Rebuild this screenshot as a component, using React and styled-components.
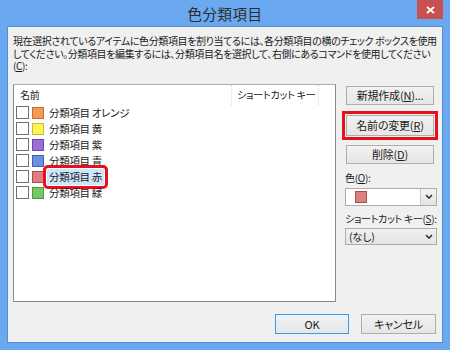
import React from "react";
import styled, { createGlobalStyle } from "styled-components";

const Global = createGlobalStyle`
  html, body { margin: 0; padding: 0; }
  body {
    width: 450px; height: 350px; overflow: hidden;
    font-family: "Noto Sans CJK JP", "Liberation Sans", sans-serif;
    font-size: 10px;
    color: #1a1a1a;
  }
`;

const Frame = styled.div`
  width: 450px;
  height: 350px;
  box-sizing: border-box;
  background: #6aa8f0;
  padding: 0 7px 7px 7px;
  display: flex;
  flex-direction: column;
`;

const TitleBar = styled.div`
  height: 26px;
  position: relative;
  display: flex;
  align-items: center;
  justify-content: center;
  font-size: 14.5px;
  color: #2b2b2b;
  letter-spacing: 0.5px;
`;

const CloseBtn = styled.div`
  position: absolute;
  right: 0;
  top: 0;
  width: 26px;
  height: 19px;
  background: #c75050;
  display: flex;
  align-items: center;
  justify-content: center;
`;

const Client = styled.div`
  flex: 1;
  background: #f0f0f0;
  border: 1px solid #4f8fd8;
  box-sizing: border-box;
  padding: 8px 5px 8px 5px;
  display: flex;
  flex-direction: column;
`;

const Desc = styled.div`
  font-size: 10px;
  line-height: 12.5px;
  white-space: nowrap;
  font-feature-settings: "palt";
  letter-spacing: -0.38px;
`;

const DescLine = styled.div`
  height: 12.5px;
`;

const U = styled.span`
  text-decoration: underline;
  text-underline-offset: 1px;
`;

const Main = styled.div`
  margin-top: 11px;
  height: 218px;
  display: flex;
  gap: 9px;
`;

const ListBox = styled.div`
  width: 323px;
  box-sizing: border-box;
  background: #fff;
  border: 1px solid #8a8a8a;
  border-top-color: #abadb3;
  display: flex;
  flex-direction: column;
`;

const HeaderRow = styled.div`
  height: 20px;
  display: grid;
  grid-template-columns: 218px 87px 1fr;
  align-items: stretch;
`;

const HeaderCell = styled.div`
  display: flex;
  align-items: center;
  padding-left: ${(p) => p.$pad || 4}px;
  border-right: ${(p) => (p.$last ? "none" : "1px dotted #dcdcdc")};
  font-size: 10px;
  white-space: nowrap;
  font-feature-settings: "palt";
  letter-spacing: -0.2px;
`;

const Row = styled.div`
  height: 16px;
  display: flex;
  align-items: center;
  padding-left: 2px;
`;

const Check = styled.div`
  width: 11px;
  height: 11px;
  border: 1px solid #707070;
  background: #fff;
  flex: none;
`;

const Swatch = styled.div`
  width: 10px;
  height: 10px;
  margin-left: ${(p) => (p.$flush ? 0 : 3)}px;
  border: 1px solid ${(p) => p.$border};
  background: ${(p) => p.$color};
  flex: none;
`;

const Label = styled.div`
  margin-left: ${(p) => (p.$selected ? 3 : 5)}px;
  padding: 0 ${(p) => (p.$selected ? 2 : 0)}px;
  height: 16px;
  line-height: 16px;
  font-size: 10.5px;
  font-feature-settings: "palt";
  letter-spacing: -0.3px;
  white-space: nowrap;
  background: ${(p) => (p.$selected ? "#cde6fb" : "transparent")};
  outline: ${(p) => (p.$selected ? "3px solid #e8101a" : "none")};
  outline-offset: 1px;
  border-radius: 1px;
`;

const Side = styled.div`
  width: 92px;
  display: flex;
  flex-direction: column;
  padding-top: 2px;
`;

const Button = styled.button`
  box-sizing: border-box;
  width: ${(p) => p.$w || 88}px;
  height: ${(p) => p.$h || 19}px;
  margin-left: ${(p) => p.$ml || 0}px;
  border: 1px solid ${(p) => (p.$default ? "#3c9be8" : "#adadad")};
  background: linear-gradient(#f2f2f2, #e6e6e6);
  font-family: "Noto Sans CJK JP", "Liberation Sans", sans-serif;
  font-size: 11px;
  font-feature-settings: "palt";
  color: #1a1a1a;
  padding: 0;
  letter-spacing: -0.2px;
  display: flex;
  align-items: center;
  justify-content: center;
  outline: ${(p) => (p.$mark ? "3px solid #e8101a" : "none")};
  outline-offset: 1px;
  border-radius: 0;
`;

const SideLabel = styled.div`
  height: 12px;
  line-height: 12px;
  font-size: 10px;
  letter-spacing: -0.3px;
  font-feature-settings: "palt";
  white-space: nowrap;
`;

const Combo = styled.div`
  box-sizing: border-box;
  height: ${(p) => p.$h}px;
  width: 92px;
  border: 1px solid ${(p) => (p.$ro ? "#acacac" : "#abadb3")};
  background: ${(p) => (p.$ro ? "linear-gradient(#f0f0f0, #e5e5e5)" : "#fff")};
  display: flex;
  align-items: center;
  font-size: 10.5px;
  font-feature-settings: "palt";
  letter-spacing: -0.2px;
`;

const ComboValue = styled.div`
  flex: 1;
  padding-left: ${(p) => p.$pad}px;
  display: flex;
  align-items: center;
`;

const DropBtn = styled.div`
  width: ${(p) => p.$w}px;
  align-self: stretch;
  display: flex;
  align-items: center;
  justify-content: center;
  border-left: ${(p) => (p.$sep ? "1px solid #c8c8c8" : "none")};
  background: ${(p) => (p.$sep ? "linear-gradient(#f3f3f3, #e4e4e4)" : "transparent")};
`;

const Footer = styled.div`
  margin-top: 12px;
  display: flex;
  justify-content: flex-end;
  gap: 12px;
  padding-right: 1px;
`;

const Spacer = styled.div`
  height: ${(p) => p.$h}px;
  flex: none;
`;

const Chevron = () => (
  <svg width="8" height="5" viewBox="0 0 8 5">
    <path d="M1 1 L4 4 L7 1" stroke="#333" strokeWidth="1.6" fill="none" />
  </svg>
);

const items = [
  { name: "オレンジ", color: "#f39b55", border: "#c8702a" },
  { name: "黄", color: "#fbf35a", border: "#c9bd2a" },
  { name: "紫", color: "#9b6fd3", border: "#6a45a3" },
  { name: "青", color: "#6d8fdf", border: "#3f5fb0" },
  { name: "赤", color: "#dc7f80", border: "#b04c4e", selected: true },
  { name: "緑", color: "#78c766", border: "#4d9a3c" },
];

export default function App() {
  return (
    <>
      <Global />
      <Frame>
        <TitleBar>
          色分類項目
          <CloseBtn>
            <svg width="9" height="8" viewBox="0 0 9 8">
              <path d="M1 1 L8 7 M8 1 L1 7" stroke="#fff" strokeWidth="1.8" />
            </svg>
          </CloseBtn>
        </TitleBar>
        <Client>
          <Desc>
            <DescLine>
              現在選択されているアイテムに色分類項目を割り当てるには、各分類項目の横のチェック ボックスを使用
            </DescLine>
            <DescLine>
              してください。分類項目を編集するには、分類項目名を選択して、右側にあるコマンドを使用してください
            </DescLine>
            <DescLine>
              (<U>C</U>):
            </DescLine>
          </Desc>
          <Main>
            <ListBox>
              <HeaderRow>
                <HeaderCell $pad={6}>名前</HeaderCell>
                <HeaderCell $pad={5}>ショートカット キー</HeaderCell>
                <HeaderCell $last />
              </HeaderRow>
              {items.map((it) => (
                <Row key={it.name}>
                  <Check />
                  <Swatch $color={it.color} $border={it.border} />
                  <Label $selected={it.selected}>分類項目 {it.name}</Label>
                </Row>
              ))}
            </ListBox>
            <Side>
              <Button $ml={1}>
                新規作成(<U>N</U>)...
              </Button>
              <Spacer $h={10} />
              <Button $ml={1} $h={21} $mark>
                名前の変更(<U>R</U>)
              </Button>
              <Spacer $h={9} />
              <Button $ml={1}>
                削除(<U>D</U>)
              </Button>
              <Spacer $h={8} />
              <SideLabel>
                色(<U>O</U>):
              </SideLabel>
              <Spacer $h={4} />
              <Combo $h={18}>
                <ComboValue $pad={9}>
                  <Swatch $flush $color="#dc7f80" $border="#b04c4e" />
                </ComboValue>
                <DropBtn $w={15} $sep>
                  <Chevron />
                </DropBtn>
              </Combo>
              <Spacer $h={7} />
              <SideLabel>
                ショートカット キー(<U>S</U>):
              </SideLabel>
              <Spacer $h={3} />
              <Combo $h={17} $ro>
                <ComboValue $pad={3}>(なし)</ComboValue>
                <DropBtn $w={14}>
                  <Chevron />
                </DropBtn>
              </Combo>
            </Side>
          </Main>
          <Footer>
            <Button $w={74} $h={20} $default>
              OK
            </Button>
            <Button $w={75} $h={20}>
              キャンセル
            </Button>
          </Footer>
        </Client>
      </Frame>
    </>
  );
}
